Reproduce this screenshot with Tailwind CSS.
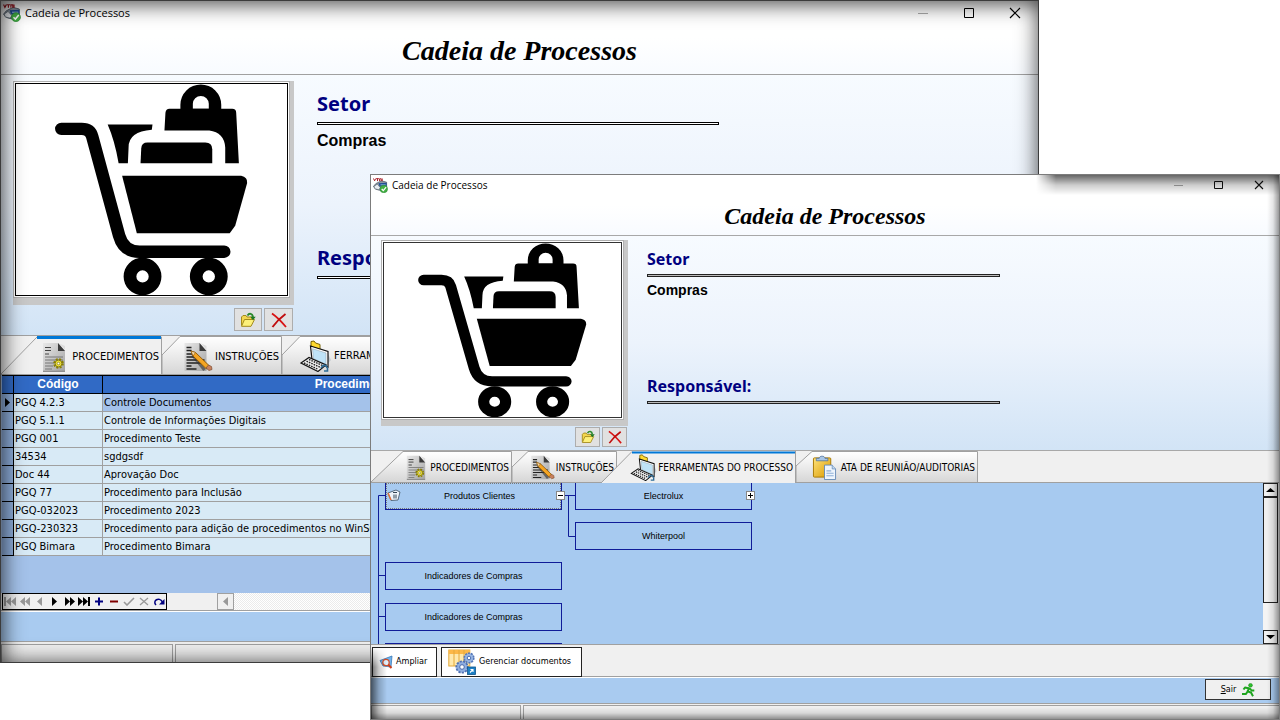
<!DOCTYPE html>
<html lang="pt-BR">
<head>
<meta charset="utf-8">
<title>Cadeia de Processos</title>
<script src="https://cdn.jsdelivr.net/npm/@tailwindcss/browser@4"></script>
</head>
<body class="relative min-h-screen overflow-hidden bg-white text-black font-['DejaVu_Sans_Condensed','Noto_Sans',sans-serif]">

<svg class="absolute h-0 w-0" aria-hidden="true">
  <defs>
    <linearGradient id="tabFill" x1="0" y1="0" x2="0" y2="1"><stop offset="0" stop-color="#fff"/><stop offset=".35" stop-color="#f2f2f2"/><stop offset="1" stop-color="#d6d6d6"/></linearGradient>
    <linearGradient id="pageFill" x1="0" y1="0" x2="1" y2="1"><stop offset="0" stop-color="#e8e8e8"/><stop offset="1" stop-color="#a4a4a4"/></linearGradient>
    <linearGradient id="clipFill" x1="0" y1="0" x2="1" y2="1"><stop offset="0" stop-color="#ffe27a"/><stop offset="1" stop-color="#d99a00"/></linearGradient>
  </defs>
  <symbol id="app" viewBox="0 0 16 16">
    <path d="M3 6 9 3l5.500 1.500v5L9 13.500l-6-1.500-2.500-3z" fill="#8d99a6" stroke="#4e5a66" stroke-width=".8"/>
    <path d="M1 9l3.500-2.500 3.500 4-2 2-4-1z" fill="#e9edf2" stroke="#5d6770" stroke-width=".7"/>
    <path d="M6 5.500 14.500 5v4H7z" fill="#1f4f93"/><path d="M8 7.300h5.500" stroke="#9fc3ee" stroke-width=".9"/>
    <circle cx="11.500" cy="11.700" r="4" fill="#43b043" stroke="#2b8a34" stroke-width=".6"/>
    <path d="M9.300 11.700l1.700 1.700 3-3.600" fill="none" stroke="#fff" stroke-width="1.300"/>
    <path d="M.5.500 1.700 3 3 .5M3.300.7h3M4.800.7v2.600M7 3.300V.8h1.700v2.500M9.800.5v2.800" fill="none" stroke="#a3141e" stroke-width="1"/>
  </symbol>
  <symbol id="cart" viewBox="16 83 272 213" preserveAspectRatio="none">
    <path d="M61.500 128.300H82Q90.500 128.300 92.500 136L119.500 236Q124 252.300 140 252.300H225" fill="none" stroke="#000" stroke-width="12.600" stroke-linecap="round"/>
    <path d="M122.500 175.700H242Q248.500 177 248 183L236 226 230.500 233.700H137.300Z"/>
    <path d="M108 124H153L152.300 129.300Q129 131 129 147L128.300 163H119Q115 140 108 124Z"/>
    <path d="M141 163 141.700 148Q142 142 148 142H206Q213 142 213 149V163Z"/>
    <path d="M165 130 166 112Q166.500 108 170 108H233Q237 108 237 112L239.700 163H226V147Q225 132 210 130Z"/>
    <path fill-rule="evenodd" d="M181 109V104A20.500 20.500 0 0 1 222 104V109ZM193.500 108V103A8 8 0 0 1 209.500 103V108Z"/>
    <path fill-rule="evenodd" d="M124 277.300a19 19 0 1 0 38 0a19 19 0 1 0-38 0ZM136.800 277.300a6.200 6.200 0 1 0 12.400 0a6.200 6.200 0 1 0-12.400 0ZM190.500 277.300a19 19 0 1 0 38 0a19 19 0 1 0-38 0ZM203.300 277.300a6.200 6.200 0 1 0 12.400 0a6.200 6.200 0 1 0-12.400 0Z"/>
  </symbol>
  <symbol id="folder" viewBox="0 0 16 16">
    <path d="M1.500 13.500V5l1.500-1.500h3l1 1.500h5v2" fill="#f3d64e" stroke="#a38a1c"/>
    <path d="M1.500 14.300 4.500 7.500h10l-3.500 6.800z" fill="#fdf07a" stroke="#a38a1c"/>
    <path d="M7.500 3.500C9 1 12.500 1 13 5" fill="none" stroke="#2b8a2b" stroke-width="1.800"/><path d="M10.300 4.800h5.400L13 8.300z" fill="#1f7a24"/>
  </symbol>
  <symbol id="cross" viewBox="0 0 16 16">
    <path d="M1 1.500C6 5 10 9 15 15" fill="none" stroke="#d81414" stroke-width="1.800"/><path d="M14.500 2C9 6 5 10 1.500 15" fill="none" stroke="#c00c0c" stroke-width="1.900"/>
  </symbol>
  <symbol id="docgear" viewBox="0 0 24 30">
    <path d="M1 1h15l7 8v20H1z" fill="url(#pageFill)"/><path d="M16 1v8h7z" fill="#3c3c3c"/><path d="M17.500 1.500 23 8V4z" fill="#ddd"/><path d="M1 29.300h22" stroke="#777"/>
    <path d="M3 5.500h6M3 8.500h6M3 12h4" stroke="#444" stroke-width="1.200"/><path d="M3 15h18M3 18h18M3 21h9M3 24h8M3 27h7" stroke="#777" stroke-width="1"/>
    <circle cx="16.500" cy="21.500" r="4.300" fill="none" stroke="#8a7f00" stroke-width="2" stroke-dasharray="2 1.400"/>
    <circle cx="16.500" cy="21.500" r="3.400" fill="#f0e43a" stroke="#6e6500" stroke-width=".8"/><circle cx="16.500" cy="21.500" r="1.300" fill="#fff" stroke="#6e6500" stroke-width=".6"/>
  </symbol>
  <symbol id="docpencil" viewBox="0 0 29 30">
    <path d="M1 1h15l7 8v20H1z" fill="url(#pageFill)"/><path d="M16 1v8h7z" fill="#3c3c3c"/><path d="M17.500 1.500 23 8V4z" fill="#ddd"/>
    <path d="M3 5.500h5M3 8.500h5M3 12h7M3 15h8M3 18h18M3 21h18M3 24h5M3 27h10" stroke="#222" stroke-width="1.300"/>
    <path d="M9 13 21 28" stroke="#333" stroke-width="3" opacity=".6"/>
    <path d="M7.500 9 12 10.500 26 24l-3 3L9.500 14z" fill="#f4a524" stroke="#8a5200" stroke-width=".9"/>
    <path d="M7.500 9l4.500 1.500-2.500 3.500z" fill="#f6d8a8" stroke="#8a5200" stroke-width=".6"/>
    <path d="M25 23 22.500 26l3 2.500 3-1-.5-3z" fill="#c9805c" stroke="#7a4a30" stroke-width=".7"/>
  </symbol>
  <symbol id="laptop" viewBox="0 0 32 32">
    <path d="M27 12l4 8-5 6-5-2z" fill="#b9c2c8" opacity=".7"/>
    <path d="M11 1.500 14 1l1.500 2 4.500 1.500v5l-9-3z" fill="#ffd92e" stroke="#776000"/>
    <path d="M10.500 6 28 11.500V27L12 19.500z" fill="#fff" stroke="#111" stroke-width="1.200"/>
    <path d="M12.500 8.700 26 13v11.500L13.500 18.600z" fill="#bfe3f7" stroke="#8a9aa5" stroke-width=".5"/>
    <path d="M1 23 9 17.500 26 25l-8 6.500z" fill="#f0f0f0" stroke="#111" stroke-width="1.200"/>
    <path d="M4 23 17.500 29M6.500 21.200 20 27.200M9 19.500 22.500 25.500" stroke="#222" stroke-width="1.400" stroke-dasharray="1.600 1"/>
    <path d="M21 28c2-4 6-3 6 0M24 31h3.500v-3" fill="none" stroke="#2d6c97" stroke-width="1.600"/>
  </symbol>
  <symbol id="clipboard" viewBox="0 0 25 26">
    <rect x="1" y="3" width="18" height="20" rx="1" fill="url(#clipFill)" stroke="#a87800"/>
    <path d="M4 5V3.500h3C7 .5 13 .5 13 3.500h3V6H4z" fill="#a9c6e6" stroke="#4b6f9c" stroke-width=".8"/>
    <path d="M12.500 10.500h8l3.500 4v11H12.500z" fill="#eef5fd" stroke="#5d84b4" stroke-width=".9"/><path d="M20.500 10.500v4H24" fill="#c4d9f0" stroke="#5d84b4" stroke-width=".7"/>
    <path d="M14.500 16.500h5M14.500 19h7.500M14.500 21.500h7.500" stroke="#8fb0d8" stroke-width="1.100"/>
  </symbol>
  <symbol id="zoomview" viewBox="0 0 14 14">
    <path d="M1 5.500 13 1l-1 11-8-1z" fill="#6fb2ea" stroke="#3a79b8" stroke-width=".8"/><path d="M3 6l6-2-2 6z" fill="#d6ebfb"/>
    <circle cx="7" cy="7.500" r="3.200" fill="#dff0fd" stroke="#d2502a" stroke-width="1.300"/><path d="M9.300 9.800 12.500 13" stroke="#c93f1c" stroke-width="2"/>
  </symbol>
  <symbol id="gears" viewBox="0 0 28 26">
    <rect x=".8" y="1" width="21" height="16" fill="#ffe9ad" stroke="#e4a93a"/><rect x=".8" y="1" width="21" height="4" fill="#fdb848"/><path d="M6 1v16M11 1v16M16 1v16" stroke="#e4a93a"/>
    <circle cx="21" cy="9" r="4.800" fill="#98b6e4" stroke="#5577b8" stroke-width="1.600" stroke-dasharray="2 1"/><circle cx="21" cy="9" r="1.800" fill="#fff" stroke="#4a6bac"/>
    <circle cx="14" cy="18" r="5.700" fill="#8faee0" stroke="#4e70b4" stroke-width="1.800" stroke-dasharray="2.200 1.200"/><circle cx="14" cy="18" r="2.300" fill="#fff" stroke="#4a6bac"/>
    <rect x="19.500" y="18" width="8" height="7.500" fill="#1d7fc4" stroke="#0d558c" stroke-width=".8"/><path d="M22 23.500l3-3m-2.500 0H25V23" fill="none" stroke="#fff" stroke-width="1.100"/>
  </symbol>
  <symbol id="runner" viewBox="0 0 14 14">
    <circle cx="9.500" cy="2.300" r="1.900" fill="#2fc02f" stroke="#128012" stroke-width=".5"/>
    <path d="M8.500 4.500 6.500 8.500M8.500 5.500 4 4.500 2.500 6.500M9 5.500l1.500 2h2.800M6.500 8.500 5 11H1M6.800 8.500 10 9.500l2 3.800" fill="none" stroke="#1fa51f" stroke-width="2" stroke-linejoin="round"/>
  </symbol>
</svg>

<main>
<!-- Back window -->
<section aria-label="Cadeia de Processos - Procedimentos" class="absolute left-0 top-0 right-[241px] min-h-[663px] flex flex-col overflow-hidden bg-[#f0f0f0] border border-[#3c3c3c]">
  <div class="bg-linear-to-b from-white from-50% to-[#f8fbff] border-b border-[#a0a0a0]">
    <div class="flex h-6 items-center">
      <svg class="ml-[2px] h-[18px] w-[18px]"><use href="#app"/></svg>
      <span class="ml-1 text-[11px] leading-4 font-['Open_Sans',sans-serif]">Cadeia de Processos</span>
      <div class="ml-auto flex h-full">
        <button aria-label="Minimizar" disabled class="grid w-[46px] place-items-center"><svg class="w-3 h-3"><path d="M1 6.500h10" stroke="#aaa"/></svg></button>
        <button aria-label="Maximizar" class="grid w-[46px] place-items-center"><svg class="w-3 h-3"><path d="M1.500 1.500h9v9h-9z" fill="none" stroke="#000"/></svg></button>
        <button aria-label="Fechar" class="grid w-[46px] place-items-center"><svg class="w-3 h-3"><path d="M1 1l10 10M11 1 1 11" stroke="#000" stroke-width="1.200"/></svg></button>
      </div>
    </div>
    <h1 class="h-[49px] text-center text-[28px] leading-[52px] font-bold italic font-['Liberation_Serif',serif]">Cadeia de Processos</h1>
  </div>
  <div class="flex h-[261px] border-b border-[#a0a0a0] bg-linear-to-b from-[#f7fbff] via-[#ecf3fc] to-[#d2e4f6]">
    <div class="pl-3 pt-[6px]">
      <div class="border-r-4 border-b-7 border-[#c8c8c8]">
        <div class="border border-[#b0b0b0] bg-white p-px"><svg class="block h-[213px] w-[273px] border border-black" role="img" aria-label="Compras"><use href="#cart"/></svg></div>
      </div>
      <div class="mt-[3px] flex justify-end gap-[2px] pr-px">
        <button aria-label="Abrir imagem" class="grid h-[23px] w-7 place-items-center border border-[#adadad] bg-[#e1e1e1]"><svg class="h-4 w-4"><use href="#folder"/></svg></button>
        <button aria-label="Remover imagem" class="grid h-[23px] w-[29px] place-items-center border border-[#adadad] bg-[#e1e1e1]"><svg class="h-4 w-4"><use href="#cross"/></svg></button>
      </div>
    </div>
    <div class="ml-[23px] w-[402px] pt-[17px]">
      <h2 class="text-[20px] leading-6 font-bold text-[#000080] font-['Comic_Sans_MS','Noto_Sans',sans-serif]">Setor</h2>
      <div class="mt-[6px] h-[3px] border border-black bg-white"></div>
      <p class="mt-[6px] text-[16px] leading-5 font-bold font-['Liberation_Sans',sans-serif]">Compras</p>
      <h2 class="mt-[95px] text-[20px] leading-6 font-bold text-[#000080] font-['Comic_Sans_MS','Noto_Sans',sans-serif]">Responsável:</h2>
      <div class="mt-[6px] h-[3px] border border-black bg-white"></div>
    </div>
  </div>
  <div role="tablist" class="flex h-[39px] border-b border-[#a0a0a0] text-[11px]">
    <button role="tab" aria-selected="true" class="relative w-[161px]">
      <svg class="absolute inset-0 h-full w-full"><path d="M0 38 36 1H160.500V38" fill="#f0f0f0" stroke="#a0a0a0"/><path d="M36 1.500H160" stroke="#0078d7" stroke-width="3"/></svg>
      <span class="relative flex items-center justify-end gap-[6px] pr-[3px] pt-1"><svg class="h-[30px] w-6"><use href="#docgear"/></svg>PROCEDIMENTOS</span>
    </button>
    <button role="tab" class="relative w-[120px]">
      <svg class="absolute inset-0 h-full w-full"><path d="M0 38V19L18 .5H119.500V38" fill="url(#tabFill)" stroke="#a0a0a0"/></svg>
      <span class="relative flex items-center justify-end gap-[2px] pr-[3px] pt-1"><svg class="h-[30px] w-[30px]"><use href="#docpencil"/></svg>INSTRUÇÕES</span>
    </button>
    <button role="tab" class="relative w-[212px]">
      <svg class="absolute inset-0 h-full w-full"><path d="M0 38V19L18 .5H211.500V38" fill="url(#tabFill)" stroke="#a0a0a0"/></svg>
      <span class="relative flex items-center gap-[2px] pl-[18px] pt-[2px] whitespace-nowrap"><svg class="h-8 w-8"><use href="#laptop"/></svg>FERRAMENTAS DO PROCESSO</span>
    </button>
  </div>
  <div class="h-[218px] bg-[#a4c2ea]">
    <table class="ml-px w-[611px] table-fixed border-separate border-spacing-0 text-left text-[11px] leading-[17px] whitespace-nowrap">
      <colgroup><col class="w-3"><col class="w-[89px]"><col></colgroup>
      <thead class="bg-[#316ac5] font-['Liberation_Sans',sans-serif] text-[12px] text-white">
        <tr><th aria-label="Registro atual" class="h-[19px] border-r border-y border-black"></th><th class="border-r border-y border-black p-0 text-center">Código</th><th class="border-y border-black p-0 text-center">Procedimentos</th></tr>
      </thead>
      <tbody class="[&_td]:h-[18px] [&_td]:overflow-hidden [&_td]:border-b [&_td]:border-r [&_td]:border-[#a0a0a0] [&_td]:bg-[#d8eaf6] [&_td]:p-0 [&_td]:pl-px [&_th]:border-b [&_th]:border-r [&_th]:border-black [&_th]:bg-[#8eaedb] [&_th]:p-0">
        <tr><th><svg class="mx-auto block h-[9px] w-[5px]"><path d="M0 0 5 4.500 0 9z"/></svg></th><td>PGQ 4.2.3</td><td class="bg-[#a4c2ea]!">Controle Documentos</td></tr>
        <tr><th></th><td>PGQ 5.1.1</td><td>Controle de Informações Digitais</td></tr>
        <tr><th></th><td>PGQ 001</td><td>Procedimento Teste</td></tr>
        <tr><th></th><td>34534</td><td>sgdgsdf</td></tr>
        <tr><th></th><td>Doc 44</td><td>Aprovação Doc</td></tr>
        <tr><th></th><td>PGQ 77</td><td>Procedimento para Inclusão</td></tr>
        <tr><th></th><td>PGQ-032023</td><td>Procedimento 2023</td></tr>
        <tr><th></th><td>PGQ-230323</td><td>Procedimento para adição de procedimentos no WinSGQ</td></tr>
        <tr><th></th><td>PGQ Bimara</td><td>Procedimento Bimara</td></tr>
      </tbody>
    </table>
  </div>
  <div class="flex h-[18px] border-b border-[#a0a0a0]">
    <div class="ml-px flex h-[17px] w-[165px] border border-black bg-white [&>button]:grid [&>button]:flex-1 [&>button]:place-items-center [&>button]:bg-[#f0f0f0] [&_svg]:h-[9px] [&_svg]:w-3">
      <button aria-label="Primeiro" disabled><svg fill="#999"><path d="M0 0h2v9H0zM7 0v9L2 4.500zM12 0v9L7 4.500z"/></svg></button>
      <button aria-label="Página anterior" disabled><svg fill="#999"><path d="M6 0v9L1 4.500zM11 0v9L6 4.500z"/></svg></button>
      <button aria-label="Anterior" disabled><svg fill="#999"><path d="M8 0v9L3 4.500z"/></svg></button>
      <button aria-label="Próximo"><svg><path d="M3 0v9l5-4.500z"/></svg></button>
      <button aria-label="Próxima página"><svg><path d="M1 0v9l5-4.500zM6 0v9l5-4.500z"/></svg></button>
      <button aria-label="Último"><svg><path d="M0 0v9l5-4.500zM5 0v9l5-4.500zM10 0h2v9h-2z"/></svg></button>
      <button aria-label="Inserir"><svg><path d="M2 4.500h8M6 .5v8" stroke="#000080" stroke-width="2"/></svg></button>
      <button aria-label="Excluir"><svg><path d="M2 4.500h8" stroke="#800000" stroke-width="2"/></svg></button>
      <button aria-label="Gravar" disabled><svg><path d="M1 5l3 3 7-7" fill="none" stroke="#999" stroke-width="1.600"/></svg></button>
      <button aria-label="Cancelar" disabled><svg><path d="M2 1l8 7M10 1 2 8" stroke="#999" stroke-width="1.300"/></svg></button>
      <button aria-label="Atualizar"><svg><path d="M3 8C-1 4 6-1 9.500 5" fill="none" stroke="#000080" stroke-width="1.500"/><path d="M11.500 2v5.500H6z" fill="#000080"/></svg></button>
    </div>
    <div class="ml-[50px] flex flex-1 bg-[repeating-conic-gradient(#fff_0_25%,#ebebeb_0_50%)] bg-[size:2px_2px]">
      <button aria-label="Rolar para a esquerda" class="grid h-[17px] w-[17px] place-items-center border border-[#a0a0a0] bg-[#f0f0f0]"><svg class="h-[9px] w-[5px]"><path d="M5 0v9L0 4.500z" fill="#999"/></svg></button>
    </div>
  </div>
  <div class="h-[30px] border-t border-white bg-[#a9cbf0]"></div>
  <div class="flex flex-1 gap-[2px] border-t border-[#a0a0a0] pt-[2px] [&>div]:border-l [&>div]:border-t [&>div]:border-[#a0a0a0]">
    <div class="w-[172px] border-r border-r-white"></div><div class="flex-1"></div>
  </div>
  <div class="pointer-events-none absolute inset-0 shadow-[inset_1px_2px_22px_rgba(0,0,0,0.8)]"></div>
</section>

<!-- Front window -->
<section aria-label="Cadeia de Processos - Ferramentas do processo" class="absolute left-[370px] right-0 top-[174px] min-h-[546px] flex flex-col overflow-hidden border border-[#7c7c7c] bg-[#f0f0f0]">
  <div class="border-b border-[#a8a8a8] bg-linear-to-b from-white from-50% to-[#f8fbff]">
    <div class="flex h-5 items-center">
      <svg class="ml-[2px] h-[15px] w-[15px]"><use href="#app"/></svg>
      <span class="ml-1 text-[10px] leading-4 font-['Open_Sans',sans-serif]">Cadeia de Processos</span>
      <div class="ml-auto flex h-full">
        <button aria-label="Minimizar" disabled class="grid w-10 place-items-center"><svg class="h-[10px] w-[10px]"><path d="M0 5.500h9" stroke="#aaa"/></svg></button>
        <button aria-label="Maximizar" class="grid w-10 place-items-center"><svg class="h-[10px] w-[10px]"><path d="M.5 1.500h8v7h-8z" fill="none" stroke="#111"/></svg></button>
        <button aria-label="Fechar" class="grid w-10 place-items-center"><svg class="h-[10px] w-[10px]"><path d="M1 1l8 8M9 1 1 9" stroke="#111" stroke-width="1.100"/></svg></button>
      </div>
    </div>
    <h1 class="h-10 text-center text-[24px] leading-[42px] font-bold italic font-['Liberation_Serif',serif]">Cadeia de Processos</h1>
  </div>
  <div class="flex h-[215px] border-b border-[#a8a8a8] bg-linear-to-b from-[#f7fbff] via-[#ecf3fc] to-[#d2e4f6]">
    <div class="pl-[10px] pt-1">
      <div class="border-b-6 border-r-4 border-[#c8c8c8]">
        <div class="border border-[#b0b0b0] bg-white p-px"><svg class="block h-[176px] w-[239px] border border-[#333]" role="img" aria-label="Compras"><use href="#cart"/></svg></div>
      </div>
      <div class="mt-px flex justify-end gap-[2px] pr-px">
        <button aria-label="Abrir imagem" class="grid h-5 w-[25px] place-items-center border border-[#adadad] bg-[#e1e1e1]"><svg class="h-[14px] w-[14px]"><use href="#folder"/></svg></button>
        <button aria-label="Remover imagem" class="grid h-5 w-[25px] place-items-center border border-[#adadad] bg-[#e1e1e1]"><svg class="h-[14px] w-[14px]"><use href="#cross"/></svg></button>
      </div>
    </div>
    <div class="ml-[19px] w-[353px] pt-[13px]">
      <h2 class="text-[16px] leading-5 font-bold text-[#000080] font-['Comic_Sans_MS','Noto_Sans',sans-serif]">Setor</h2>
      <div class="mt-[5px] h-[3px] border border-[#222] bg-[#bbb]"></div>
      <p class="mt-[3px] text-[14px] leading-5 font-bold font-['Liberation_Sans',sans-serif]">Compras</p>
      <h2 class="mt-[76px] text-[16px] leading-5 font-bold text-[#000080] font-['Comic_Sans_MS','Noto_Sans',sans-serif]">Responsável:</h2>
      <div class="mt-[5px] h-[3px] border border-[#222] bg-[#bbb]"></div>
    </div>
  </div>
  <div role="tablist" class="flex h-8 border-b border-[#a0a0a0] text-[10px] [&>button]:whitespace-nowrap">
    <button role="tab" class="relative w-[141px]">
      <svg class="absolute inset-0 h-full w-full"><path d="M0 31 32 .5H140.500V31" fill="url(#tabFill)" stroke="#a0a0a0"/></svg>
      <span class="relative flex items-center justify-end gap-[3px] pr-[3px] pt-[2px]"><svg class="h-[25px] w-[22px]"><use href="#docgear"/></svg>PROCEDIMENTOS</span>
    </button>
    <button role="tab" class="relative w-[105px]">
      <svg class="absolute inset-0 h-full w-full"><path d="M0 31V16L16 .5H104.500V31" fill="url(#tabFill)" stroke="#a0a0a0"/></svg>
      <span class="relative flex items-center justify-end gap-px pr-[3px] pt-[2px]"><svg class="h-[25px] w-[25px]"><use href="#docpencil"/></svg>INSTRUÇÕES</span>
    </button>
    <button role="tab" aria-selected="true" class="relative z-10 -ml-4 w-[195px]">
      <svg class="absolute inset-0 h-8 w-full"><path d="M0 32 31 .5H194.500V32" fill="#f0f0f0"/><path d="M0 32 31 .5M194.500 0V32" stroke="#a0a0a0"/><path d="M31 1.500H194" stroke="#0078d7" stroke-width="2"/></svg>
      <span class="relative flex items-center justify-end pr-[3px] pt-px"><svg class="h-[27px] w-7"><use href="#laptop"/></svg>FERRAMENTAS DO PROCESSO</span>
    </button>
    <button role="tab" class="relative w-[182px]">
      <svg class="absolute inset-0 h-full w-full"><path d="M0 31V15L16 .5H181.500V31" fill="url(#tabFill)" stroke="#a0a0a0"/></svg>
      <span class="relative flex items-center justify-end gap-1 pr-[3px] pt-px"><svg class="h-[25px] w-[25px]"><use href="#clipboard"/></svg>ATA DE REUNIÃO/AUDITORIAS</span>
    </button>
  </div>
  <div class="flex h-[162px] border-b border-[#a0a0a0]">
    <!-- Process tree canvas -->
    <div class="relative flex-1 overflow-hidden bg-[#a7caf0] font-['Liberation_Sans',sans-serif] text-[9px] leading-3 text-black [&>div]:absolute [&>div]:grid [&>div]:h-7 [&>div]:w-[177px] [&>div]:place-items-center [&>div]:border [&>div]:border-[#101c98]">
      <svg class="absolute inset-0 h-full w-full" fill="none" stroke="#101c98"><path d="M7.500 162V12.500H14M7.500 92.500H14M7.500 133.500H14M191 12.500H204M197.500 12.500V53.500H204"/></svg>
      <div class="left-[14px] -top-px pl-3 outline-1 -outline-offset-2 outline-dotted outline-[#777]">Produtos Clientes</div>
      <div class="left-[204px] -top-px">Electrolux</div>
      <div class="left-[204px] top-[39px]">Whiterpool</div>
      <div class="left-[14px] top-[79px]">Indicadores de Compras</div>
      <div class="left-[14px] top-[120px]">Indicadores de Compras</div>
      <div class="left-[14px] top-[160px]"></div>
      <svg class="absolute left-4 top-[6px] h-3 w-[14px]"><path d="M1 4l8-3 4 2-2 8-7 .5z" fill="#eef4fa" stroke="#566a7d"/><path d="M1 4l3 7" stroke="#e2703a" stroke-width="1.500"/><path d="M6 3.500h4M7 5.500v4M9 5.500v4" stroke="#345"/></svg>
      <button aria-label="Recolher Produtos Clientes" class="absolute left-[185px] top-2 h-[9px] w-[9px] border border-[#888] bg-white"><svg class="block h-[7px] w-[7px]"><path d="M1 3.500h5" stroke="#000"/></svg></button>
      <button aria-label="Expandir Electrolux" class="absolute left-[375px] top-2 h-[9px] w-[9px] border border-[#888] bg-white"><svg class="block h-[7px] w-[7px]"><path d="M1 3.500h5M3.500 1v5" stroke="#000"/></svg></button>
    </div>
    <div class="flex w-4 flex-col bg-[#f4f4f4] pr-px">
      <button aria-label="Rolar para cima" class="grid h-[14px] place-items-center border border-[#222] bg-[#f0f0f0]"><svg class="h-1 w-[9px]"><path d="M4.500 0 9 4H0z"/></svg></button>
      <div class="h-[106px] border border-[#222] bg-[#efefef]"></div>
      <button aria-label="Rolar para baixo" class="mt-auto grid h-[14px] place-items-center border border-[#222] bg-[#f0f0f0]"><svg class="h-1 w-[9px]"><path d="M0 0h9L4.500 4z"/></svg></button>
    </div>
  </div>
  <div class="flex h-8 gap-1 border-b border-[#a0a0a0] pl-px pt-[2px] text-[9px]">
    <button class="flex h-[30px] w-[65px] items-center gap-[3px] border border-[#222] bg-white pl-[6px]"><svg class="h-[14px] w-[14px]"><use href="#zoomview"/></svg>Ampliar</button>
    <button class="flex h-[30px] w-[141px] items-center gap-[3px] border border-[#222] bg-white pl-[6px] whitespace-nowrap"><svg class="h-[26px] w-7"><use href="#gears"/></svg>Gerenciar documentos</button>
  </div>
  <div class="flex h-[26px] justify-end border-t border-white bg-[#a9cbf0] pr-2 pt-px">
    <button class="flex h-[21px] w-[66px] items-center justify-center gap-[5px] border border-[#333] bg-[#f0f0f0] text-[9px]"><span><u>S</u>air</span><svg class="h-[14px] w-[14px]"><use href="#runner"/></svg></button>
  </div>
  <div class="flex flex-1 gap-[2px] border-t border-[#a0a0a0] pt-px [&>div]:border-l [&>div]:border-t [&>div]:border-[#a0a0a0]">
    <div class="w-[150px] border-r border-r-white"></div><div class="flex-1"></div>
  </div>
  <div class="pointer-events-none absolute right-0 top-0 left-[665px] h-5 bg-linear-to-b from-black/60 via-black/20 to-transparent [mask-image:linear-gradient(to_right,transparent,black_20px)]"></div>
  <div class="pointer-events-none absolute inset-y-0 right-0 w-3 bg-linear-to-l from-black/40 via-black/10 to-transparent"></div>
  <div class="pointer-events-none absolute inset-x-0 bottom-0 h-3 bg-linear-to-t from-black/40 via-black/10 to-transparent"></div>
  <div class="pointer-events-none absolute bottom-0 left-0 h-[72px] w-4 bg-linear-to-r from-black/60 via-black/20 to-transparent [mask-image:linear-gradient(to_bottom,transparent,black_20px)]"></div>
</section>
</main>
</body>
</html>
